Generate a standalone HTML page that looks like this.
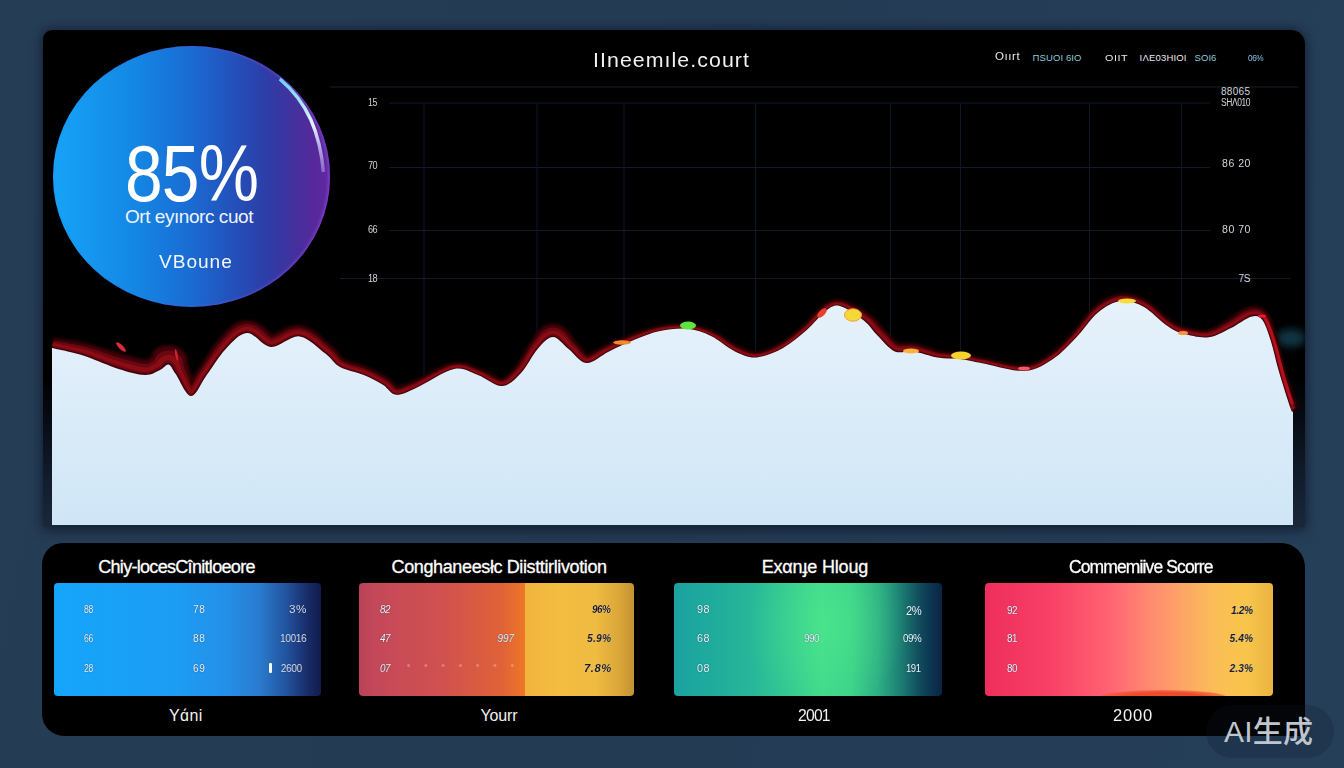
<!DOCTYPE html>
<html lang="en"><head><meta charset="utf-8"><title>Dashboard</title>
<style>
*{margin:0;padding:0;box-sizing:border-box}
html,body{width:1344px;height:768px;overflow:hidden}
body{position:relative;font-family:"Liberation Sans","Noto Sans CJK SC",sans-serif;color:#fff;
 background:linear-gradient(100deg,#263d56 0%,#243b54 50%,#263f59 100%);}
.abs{position:absolute;white-space:nowrap;line-height:1}
#main{position:absolute;left:43px;top:30px;width:1262px;height:497px;border-radius:9px 14px 0 0;
 background:linear-gradient(180deg,#000 0,#000 70%,#080e17 80%,#121e2e 91%,#192839 100%);
 box-shadow:0 -2px 9px rgba(16,26,40,.5),0 4px 12px rgba(14,24,38,.6);}
#chart{position:absolute;left:0;top:0}
#gauge{position:absolute;left:52.6px;top:46.2px;width:277.6px;height:260.4px;border-radius:50%;
 background:linear-gradient(90deg,#16a2f7 0%,#1598f0 12%,#1486e4 30%,#1a6bd2 50%,#2352bc 64%,#2c3fa8 76%,#40329e 86%,#55299a 94%,#6228a0 100%);box-shadow:inset -2px 0 3px rgba(150,80,240,.5);}
#bottom{position:absolute;left:42px;top:543px;width:1263px;height:193px;background:#000;border-radius:21px 24px 3px 22px}
.card{position:absolute;top:583px;height:113px;border-radius:4px}
</style></head><body>
<div id="main"></div>
<svg id="chart" width="1344" height="768" viewBox="0 0 1344 768">
 <defs>
  <filter id="bl2" x="-50%" y="-50%" width="200%" height="200%"><feGaussianBlur stdDeviation="4"/></filter>
  <clipPath id="pc"><rect x="43" y="30" width="1262" height="497"/></clipPath>
  <filter id="bl" x="-2%" y="-20%" width="104%" height="140%"><feGaussianBlur stdDeviation="1.1"/></filter>
  <linearGradient id="wf" x1="0" y1="0" x2="0" y2="1"><stop offset="0" stop-color="#e6f2fb"/><stop offset=".45" stop-color="#dcecf9"/><stop offset="1" stop-color="#cfe6f6"/></linearGradient>
 </defs>
 <g stroke="#13192b" stroke-width="1" fill="none">
  <path d="M330 87H1298" stroke="#1b1e27"/>
  <path d="M389 103H1210M389 167.5H1210M389 230.5H1210"/>
  <path d="M340 278.5H1290" stroke="#15192a"/>
  <path stroke="#10162a" d="M424 103V380M537 103V380M624 103V360M755.5 103V360M890.5 103V360M960.5 103V365M1089.5 103V330M1181.5 103V340"/>
 </g>
 <g clip-path="url(#pc)"><ellipse cx="1291" cy="338" rx="15" ry="9" fill="#14485a" opacity=".75" filter="url(#bl2)"/></g>
 <path d="M51.7 349.5 L53.1 349.8 L54.9 350.2 L57.1 350.7 L59.6 351.2 L62.1 351.8 L64.7 352.4 L67.3 353.0 L69.6 353.6 L71.7 354.2 L73.7 354.7 L75.6 355.2 L77.5 355.7 L79.5 356.3 L81.7 357.0 L84.2 357.8 L87.0 358.8 L90.2 360.0 L93.8 361.5 L97.7 363.1 L101.8 364.9 L105.9 366.6 L110.1 368.3 L114.1 369.9 L117.9 371.2 L121.5 372.3 L125.1 373.4 L128.7 374.4 L132.1 375.3 L135.5 376.1 L138.8 376.7 L141.8 377.1 L144.8 377.3 L147.5 377.2 L150.0 376.7 L152.3 376.1 L154.4 375.3 L156.3 374.4 L158.0 373.6 L159.5 372.8 L161.1 372.1 L162.7 371.3 L164.2 370.3 L165.5 369.2 L166.6 368.3 L167.5 367.7 L168.1 367.3 L168.1 367.3 L168.0 367.3 L168.0 367.4 L168.2 367.5 L168.7 368.1 L169.4 368.9 L170.3 370.1 L171.3 371.6 L172.5 373.4 L173.9 375.2 L175.4 377.5 L177.2 380.5 L179.2 384.1 L181.3 387.8 L183.5 391.3 L185.7 394.3 L188.1 396.5 L190.9 397.5 L193.7 396.8 L195.9 394.9 L197.9 392.4 L199.9 389.3 L201.9 385.9 L203.8 382.4 L205.8 379.0 L207.9 375.9 L210.1 372.8 L212.4 369.5 L214.7 366.0 L217.1 362.6 L219.5 359.2 L222.0 355.9 L224.4 352.8 L226.9 350.1 L229.5 347.5 L232.0 344.8 L234.6 342.2 L237.2 339.9 L239.8 337.9 L242.3 336.3 L244.7 335.3 L247.0 334.9 L249.2 335.3 L251.7 336.6 L254.4 338.6 L257.3 341.1 L260.4 343.7 L263.6 346.1 L267.1 347.9 L270.9 348.8 L274.8 348.4 L278.6 347.1 L282.3 345.1 L286.0 343.0 L289.6 340.9 L293.1 339.2 L296.3 338.2 L299.3 338.0 L302.4 338.8 L305.7 340.3 L309.1 342.3 L312.6 344.8 L315.9 347.5 L319.1 350.2 L322.1 352.7 L324.8 354.9 L327.1 356.7 L328.9 358.5 L330.5 360.2 L332.0 361.9 L333.5 363.5 L335.2 365.1 L337.1 366.7 L339.4 368.1 L342.0 369.4 L345.0 370.5 L348.1 371.5 L351.3 372.4 L354.5 373.3 L357.6 374.2 L360.6 375.1 L363.3 376.2 L366.0 377.3 L368.5 378.4 L371.0 379.6 L373.5 380.9 L375.8 382.1 L378.1 383.4 L380.2 384.6 L382.2 385.8 L384.0 387.1 L385.6 388.5 L387.1 390.1 L388.5 391.7 L390.0 393.2 L391.7 394.5 L393.7 395.5 L395.9 396.0 L398.1 396.0 L400.3 395.7 L402.5 395.1 L404.9 394.3 L407.3 393.2 L410.0 392.0 L413.0 390.5 L416.5 389.0 L420.5 387.0 L425.1 384.4 L430.0 381.5 L435.2 378.5 L440.4 375.6 L445.4 373.1 L450.1 371.1 L454.2 369.9 L457.7 369.4 L460.9 369.5 L463.8 370.0 L466.6 371.0 L469.2 372.1 L471.9 373.4 L474.7 374.7 L477.6 375.9 L480.6 377.2 L483.6 378.8 L486.7 380.7 L489.8 382.5 L492.9 384.3 L496.0 385.8 L499.0 386.8 L502.0 387.1 L504.9 386.6 L507.6 385.7 L510.2 384.3 L512.7 382.6 L515.0 380.6 L517.4 378.4 L519.6 376.1 L521.9 373.8 L524.2 371.2 L526.4 368.2 L528.5 365.0 L530.6 361.6 L532.7 358.3 L534.7 355.1 L536.7 352.3 L538.7 349.9 L540.7 347.7 L542.7 345.6 L544.6 343.7 L546.5 342.1 L548.3 340.7 L550.0 339.7 L551.6 339.2 L553.0 339.0 L554.3 339.2 L555.8 339.9 L557.5 341.1 L559.4 342.7 L561.4 344.5 L563.4 346.5 L565.5 348.4 L567.6 350.1 L569.7 351.9 L571.8 353.9 L573.9 356.2 L576.1 358.4 L578.4 360.5 L580.9 362.3 L583.5 363.6 L586.3 364.2 L589.2 363.9 L592.1 363.0 L594.9 361.5 L597.8 359.8 L600.7 357.8 L603.6 355.8 L606.5 353.9 L609.5 352.3 L612.5 350.8 L615.7 349.2 L619.0 347.7 L622.2 346.1 L625.5 344.5 L628.8 343.0 L632.1 341.6 L635.3 340.3 L638.5 339.0 L641.6 337.7 L644.6 336.5 L647.7 335.4 L650.7 334.3 L653.8 333.3 L656.9 332.4 L660.1 331.7 L663.5 331.1 L666.9 330.5 L670.4 330.0 L674.0 329.6 L677.5 329.3 L680.9 329.2 L684.3 329.2 L687.5 329.4 L690.6 329.8 L693.6 330.4 L696.5 331.1 L699.3 331.9 L702.1 332.9 L704.9 334.1 L707.8 335.3 L710.7 336.7 L713.6 338.3 L716.6 340.2 L719.6 342.2 L722.6 344.4 L725.7 346.6 L728.7 348.7 L731.7 350.6 L734.6 352.2 L737.4 353.5 L740.1 354.7 L742.8 355.8 L745.5 356.7 L748.1 357.5 L750.9 358.0 L753.8 358.2 L756.8 358.2 L759.9 357.8 L763.2 357.1 L766.6 356.1 L770.0 354.9 L773.4 353.5 L776.8 352.0 L780.2 350.4 L783.4 348.7 L786.5 346.8 L789.7 344.8 L792.8 342.6 L795.8 340.2 L798.8 337.8 L801.7 335.4 L804.5 333.0 L807.2 330.6 L809.9 328.2 L812.5 325.6 L815.0 322.9 L817.4 320.2 L819.7 317.7 L822.0 315.4 L824.1 313.3 L826.2 311.7 L828.1 310.2 L829.9 309.0 L831.4 307.9 L832.9 307.2 L834.4 306.6 L835.9 306.4 L837.7 306.4 L839.8 306.9 L842.2 307.7 L845.1 309.1 L848.2 310.8 L851.3 312.8 L854.5 315.0 L857.6 317.3 L860.5 319.4 L863.0 321.4 L865.2 323.3 L867.0 325.2 L868.7 327.1 L870.3 329.0 L871.9 331.0 L873.5 333.0 L875.2 335.0 L877.0 336.9 L879.0 339.0 L881.0 341.1 L883.0 343.4 L885.1 345.6 L887.3 347.7 L889.5 349.7 L891.9 351.3 L894.3 352.6 L896.8 353.4 L899.2 353.6 L901.7 353.5 L904.0 353.2 L906.4 352.9 L908.8 352.5 L911.2 352.4 L913.7 352.5 L916.3 353.0 L919.2 353.6 L922.1 354.4 L925.2 355.3 L928.3 356.2 L931.4 357.0 L934.5 357.7 L937.4 358.3 L940.4 358.7 L943.2 358.9 L946.1 359.1 L948.9 359.2 L951.6 359.2 L954.4 359.4 L957.1 359.5 L959.9 359.8 L962.5 360.2 L965.0 360.6 L967.4 361.0 L969.8 361.5 L972.4 362.1 L975.2 362.7 L978.5 363.3 L982.2 364.1 L986.7 365.0 L991.7 366.2 L997.3 367.6 L1003.1 368.9 L1008.9 370.2 L1014.6 371.2 L1020.0 371.8 L1024.8 371.8 L1029.2 371.3 L1033.2 370.4 L1037.0 369.1 L1040.5 367.5 L1043.9 365.7 L1047.1 363.8 L1050.3 361.8 L1053.5 359.7 L1056.6 357.5 L1059.6 355.1 L1062.5 352.6 L1065.3 349.9 L1068.0 347.2 L1070.8 344.4 L1073.5 341.5 L1076.3 338.6 L1079.1 335.5 L1082.0 332.1 L1084.7 328.7 L1087.5 325.2 L1090.3 321.7 L1093.1 318.5 L1095.8 315.6 L1098.6 313.1 L1101.4 310.9 L1104.2 309.0 L1107.1 307.2 L1109.9 305.6 L1112.8 304.3 L1115.6 303.3 L1118.4 302.5 L1121.1 302.0 L1123.9 301.8 L1126.6 302.0 L1129.3 302.4 L1132.1 303.0 L1134.8 303.9 L1137.6 305.0 L1140.4 306.2 L1143.1 307.6 L1145.9 309.3 L1148.7 311.5 L1151.6 313.9 L1154.5 316.4 L1157.4 319.0 L1160.2 321.5 L1162.9 323.8 L1165.5 325.7 L1167.8 327.3 L1169.9 328.7 L1171.9 329.9 L1173.9 331.0 L1175.8 332.0 L1177.9 332.9 L1180.2 333.7 L1182.7 334.5 L1185.6 335.3 L1188.6 336.1 L1191.9 336.9 L1195.3 337.6 L1198.7 338.1 L1202.2 338.4 L1205.5 338.5 L1208.7 338.4 L1211.8 337.8 L1214.8 337.0 L1217.8 335.9 L1220.7 334.6 L1223.5 333.3 L1226.2 331.9 L1228.9 330.5 L1231.6 329.1 L1234.3 327.7 L1237.1 326.1 L1239.8 324.4 L1242.5 322.8 L1245.0 321.2 L1247.4 319.8 L1249.5 318.8 L1251.4 318.1 L1253.1 317.6 L1254.6 317.4 L1255.8 317.3 L1256.9 317.4 L1257.9 317.7 L1258.9 318.2 L1259.9 319.0 L1261.1 320.2 L1262.2 321.8 L1263.4 323.8 L1264.5 326.1 L1265.6 328.7 L1266.7 331.6 L1267.7 334.6 L1268.8 337.8 L1269.9 341.0 L1270.9 344.3 L1271.9 347.9 L1272.9 351.6 L1273.8 355.5 L1274.8 359.5 L1275.8 363.6 L1276.9 367.8 L1278.1 372.1 L1279.4 376.6 L1280.9 381.7 L1282.6 386.9 L1284.2 392.2 L1285.8 397.3 L1287.3 401.9 L1288.6 405.8 L1289.6 408.8 L1290.4 410.9 L1291.0 412.1 L1291.7 412.9 L1293.2 412.9 L1293.7 412.1 L1293.8 411.6 L1293.8 411.6 L1293.3 412.0 L1290.8 404.4 L1286.9 407.4 L1286.1 409.5 L1286.1 409.3 L1288.3 406.5 L1296.4 406.4 L1297.9 408.1 L1297.7 407.8 L1297.0 406.2 L1296.0 403.3 L1294.7 399.5 L1293.1 395.0 L1291.5 389.9 L1289.8 384.7 L1288.1 379.5 L1286.5 374.5 L1285.1 370.0 L1283.9 365.9 L1282.8 361.9 L1281.7 357.8 L1280.7 353.8 L1279.8 349.9 L1278.8 346.1 L1277.9 342.3 L1276.9 338.8 L1275.9 335.4 L1275.0 332.1 L1274.1 328.9 L1273.1 325.8 L1272.1 322.8 L1271.0 319.9 L1269.7 317.1 L1268.2 314.6 L1266.5 312.3 L1264.5 310.4 L1262.0 308.6 L1259.1 307.4 L1256.2 306.8 L1253.4 306.8 L1250.9 307.1 L1248.2 307.6 L1245.1 308.7 L1242.2 310.2 L1239.4 311.9 L1236.7 313.7 L1234.2 315.6 L1231.7 317.3 L1229.4 318.9 L1227.0 320.4 L1224.5 321.9 L1221.8 323.5 L1219.3 325.1 L1216.8 326.5 L1214.4 327.8 L1212.1 328.8 L1209.9 329.6 L1207.8 330.2 L1205.4 330.5 L1202.7 330.5 L1199.7 330.3 L1196.6 330.0 L1193.5 329.4 L1190.4 328.8 L1187.5 328.1 L1184.8 327.4 L1182.5 326.8 L1180.6 326.1 L1178.8 325.5 L1177.2 324.7 L1175.5 323.8 L1173.7 322.8 L1171.7 321.5 L1169.6 320.0 L1167.3 318.3 L1164.8 316.2 L1162.2 313.7 L1159.3 311.1 L1156.4 308.4 L1153.3 305.7 L1150.1 303.2 L1146.8 301.1 L1143.6 299.5 L1140.6 298.0 L1137.4 296.7 L1134.2 295.6 L1130.8 294.7 L1127.3 294.2 L1123.8 294.0 L1120.2 294.2 L1116.6 294.9 L1113.2 295.9 L1109.8 297.2 L1106.5 298.8 L1103.3 300.7 L1100.1 302.8 L1097.1 305.1 L1094.0 307.6 L1090.9 310.6 L1087.9 313.9 L1085.0 317.3 L1082.2 320.9 L1079.5 324.5 L1076.8 328.0 L1074.2 331.2 L1071.6 334.2 L1068.9 337.1 L1066.2 340.0 L1063.5 342.7 L1060.9 345.4 L1058.2 347.9 L1055.6 350.3 L1052.8 352.4 L1049.9 354.4 L1046.8 356.4 L1043.8 358.4 L1040.7 360.2 L1037.7 361.9 L1034.7 363.2 L1031.5 364.3 L1028.1 365.1 L1024.5 365.6 L1020.4 365.6 L1015.5 365.1 L1010.1 364.2 L1004.4 363.0 L998.7 361.7 L993.1 360.4 L988.0 359.2 L983.4 358.3 L979.6 357.5 L976.4 356.9 L973.6 356.2 L971.0 355.6 L968.6 355.1 L966.1 354.5 L963.5 354.0 L960.7 353.5 L957.7 353.2 L954.7 352.9 L951.9 352.7 L949.1 352.6 L946.4 352.4 L943.7 352.2 L941.1 351.8 L938.6 351.3 L936.0 350.7 L933.3 349.8 L930.4 348.8 L927.4 347.8 L924.4 346.6 L921.2 345.6 L918.1 344.6 L914.8 343.8 L911.3 343.4 L908.0 343.4 L905.1 343.5 L902.8 343.7 L900.9 343.8 L899.6 343.7 L898.8 343.5 L898.2 343.3 L897.3 342.7 L895.9 341.6 L894.3 340.2 L892.5 338.4 L890.6 336.3 L888.6 334.1 L886.5 331.9 L884.5 329.8 L882.8 328.0 L881.4 326.4 L879.9 324.6 L878.2 322.6 L876.3 320.5 L874.1 318.4 L871.7 316.2 L868.9 314.2 L866.0 312.2 L862.7 310.2 L859.2 308.2 L855.6 306.2 L852.0 304.3 L848.4 302.6 L844.9 301.2 L841.5 300.3 L838.4 299.9 L835.5 300.0 L832.8 300.5 L830.3 301.4 L828.2 302.5 L826.2 303.8 L824.4 305.1 L822.3 306.6 L820.0 308.6 L817.5 310.9 L815.1 313.4 L812.7 316.0 L810.3 318.6 L807.9 321.2 L805.5 323.6 L803.1 325.9 L800.4 328.2 L797.6 330.6 L794.8 333.0 L792.0 335.4 L789.1 337.6 L786.2 339.7 L783.3 341.7 L780.4 343.4 L777.4 345.0 L774.3 346.6 L771.1 348.1 L767.9 349.4 L764.8 350.5 L761.8 351.4 L758.9 351.9 L756.3 352.2 L754.0 352.2 L751.7 351.9 L749.6 351.4 L747.4 350.7 L745.1 349.8 L742.7 348.7 L740.2 347.5 L737.6 346.3 L735.0 344.9 L732.3 343.3 L729.4 341.4 L726.3 339.3 L723.1 337.2 L719.9 335.1 L716.6 333.2 L713.2 331.5 L710.1 330.2 L707.0 329.0 L704.0 328.0 L700.9 327.0 L697.8 326.2 L694.6 325.5 L691.4 325.0 L688.0 324.6 L684.5 324.3 L680.9 324.3 L677.2 324.3 L673.5 324.5 L669.8 324.8 L666.1 325.2 L662.5 325.7 L659.0 326.3 L655.6 327.0 L652.2 327.8 L648.9 328.8 L645.7 329.8 L642.5 330.9 L639.3 332.0 L636.1 333.2 L632.9 334.3 L629.6 335.6 L626.1 336.9 L622.7 338.3 L619.2 339.7 L615.8 341.1 L612.5 342.5 L609.2 343.9 L605.9 345.3 L602.5 347.0 L599.1 349.0 L596.0 350.9 L593.2 352.6 L590.7 353.9 L588.7 354.8 L587.4 355.0 L586.9 354.9 L586.7 354.7 L586.1 354.1 L584.9 352.9 L583.3 351.2 L581.5 349.0 L579.5 346.5 L577.3 343.8 L575.2 341.4 L573.6 339.5 L572.3 337.5 L570.8 335.2 L569.0 332.6 L566.7 329.9 L563.6 327.2 L559.1 324.8 L553.2 323.8 L547.7 324.7 L543.4 326.7 L540.2 329.3 L537.7 332.0 L535.7 334.9 L534.0 337.6 L532.3 340.3 L530.4 343.0 L528.4 346.1 L526.3 349.6 L524.3 353.1 L522.3 356.5 L520.4 359.8 L518.6 362.8 L516.8 365.4 L515.1 367.6 L513.1 369.8 L511.1 372.0 L509.2 374.0 L507.4 375.8 L505.7 377.1 L504.2 378.1 L502.9 378.7 L501.8 379.0 L500.7 378.9 L498.9 378.5 L496.5 377.4 L493.7 376.0 L490.6 374.2 L487.3 372.4 L483.8 370.6 L480.4 369.2 L477.5 368.2 L474.9 367.1 L472.1 365.8 L468.9 364.6 L465.5 363.6 L461.6 362.9 L457.4 362.7 L452.7 363.3 L447.8 364.7 L442.5 366.8 L437.1 369.4 L431.7 372.2 L426.3 375.0 L421.3 377.7 L416.8 379.9 L413.0 381.6 L409.6 383.0 L406.5 384.3 L403.9 385.3 L401.7 386.1 L399.9 386.7 L398.6 386.9 L397.6 387.0 L397.0 386.9 L396.8 386.9 L396.7 386.7 L396.2 386.2 L395.2 385.2 L393.8 383.8 L392.1 381.9 L389.9 379.9 L387.4 378.0 L385.0 376.5 L382.7 375.2 L380.3 373.8 L377.8 372.5 L375.2 371.2 L372.5 369.9 L369.8 368.6 L366.9 367.3 L363.7 366.1 L360.4 365.0 L357.1 364.0 L353.9 363.1 L350.9 362.2 L348.2 361.3 L345.9 360.4 L344.2 359.5 L342.9 358.6 L341.9 357.6 L340.9 356.5 L339.7 355.1 L338.3 353.2 L336.5 351.1 L334.2 348.7 L331.7 346.5 L329.2 344.2 L326.4 341.7 L323.2 338.7 L319.7 335.6 L315.8 332.5 L311.5 329.6 L306.6 327.1 L300.6 325.5 L294.1 325.6 L288.3 327.2 L283.5 329.3 L279.4 331.5 L275.9 333.3 L273.2 334.6 L271.7 335.0 L271.8 334.9 L272.2 334.8 L271.3 334.2 L269.3 332.5 L266.7 330.1 L263.5 327.3 L259.5 324.3 L254.0 321.5 L247.0 320.4 L240.6 321.5 L235.7 323.7 L231.6 326.4 L228.2 329.4 L225.2 332.5 L222.5 335.6 L220.1 338.6 L217.6 341.6 L214.9 344.8 L212.3 348.5 L209.8 352.2 L207.4 355.8 L205.0 359.5 L202.8 362.9 L200.7 366.2 L198.5 369.3 L196.1 372.8 L193.9 376.6 L191.9 380.2 L190.1 383.3 L188.5 385.7 L187.5 386.9 L188.0 386.5 L191.6 385.7 L195.0 386.5 L195.1 386.3 L194.1 384.3 L192.8 381.2 L191.5 377.5 L190.3 373.6 L189.0 369.7 L187.8 366.2 L187.3 363.9 L187.3 362.1 L187.3 360.3 L187.1 358.2 L186.2 355.5 L183.9 352.1 L179.6 348.4 L172.8 345.5 L164.3 345.4 L157.6 348.0 L154.2 350.9 L152.6 353.0 L152.0 354.4 L152.0 355.2 L152.6 355.4 L152.7 355.8 L151.5 356.8 L149.9 358.0 L148.6 358.8 L147.6 359.4 L146.9 359.7 L146.3 359.8 L145.8 359.9 L145.1 359.9 L143.6 359.7 L141.6 359.3 L139.1 358.8 L136.4 358.0 L133.3 357.2 L130.1 356.3 L126.7 355.4 L123.3 354.5 L119.9 353.6 L116.1 352.5 L112.1 351.3 L107.9 350.0 L103.6 348.6 L99.5 347.3 L95.5 346.1 L91.8 345.1 L88.7 344.2 L85.9 343.5 L83.4 343.0 L81.1 342.5 L78.9 342.1 L76.9 341.8 L74.9 341.5 L72.7 341.1 L70.2 340.6 L67.5 340.2 L64.8 339.7 L62.1 339.3 L59.6 338.9 L57.4 338.6 L55.5 338.3 L54.1 338.1Z" fill="#420308" stroke="#2a0205" stroke-width="2" stroke-linejoin="round" filter="url(#bl)"/>
 <path d="M52.2 347.0 L53.6 347.3 L55.5 347.7 L57.7 348.1 L60.1 348.7 L62.7 349.2 L65.3 349.8 L67.9 350.3 L70.3 350.9 L72.4 351.4 L74.4 351.9 L76.3 352.4 L78.3 352.9 L80.4 353.4 L82.6 354.1 L85.2 354.9 L88.0 355.8 L91.3 357.0 L95.0 358.4 L99.0 360.0 L103.1 361.6 L107.3 363.3 L111.4 364.9 L115.4 366.3 L119.1 367.6 L122.6 368.6 L126.2 369.7 L129.7 370.7 L133.1 371.6 L136.3 372.3 L139.4 372.9 L142.2 373.3 L144.8 373.5 L147.1 373.4 L149.2 373.1 L151.1 372.5 L152.9 371.8 L154.6 371.0 L156.2 370.2 L157.8 369.3 L159.3 368.6 L160.5 367.9 L161.6 367.0 L162.6 366.0 L163.6 365.0 L164.6 364.0 L165.8 363.2 L167.3 362.6 L169.0 362.6 L170.5 363.2 L171.6 364.2 L172.5 365.3 L173.3 366.6 L174.0 368.0 L174.8 369.6 L175.7 371.3 L176.9 373.2 L178.4 375.8 L180.1 379.0 L181.9 382.7 L183.8 386.3 L185.8 389.7 L187.8 392.5 L189.6 394.4 L191.1 395.0 L192.4 394.6 L194.1 393.2 L195.9 390.9 L197.8 388.0 L199.7 384.6 L201.7 381.1 L203.7 377.6 L205.9 374.4 L208.1 371.3 L210.3 368.0 L212.6 364.6 L215.0 361.1 L217.4 357.6 L219.9 354.3 L222.4 351.1 L224.9 348.3 L227.4 345.5 L230.0 342.8 L232.6 340.1 L235.3 337.6 L238.0 335.4 L240.9 333.6 L243.8 332.3 L247.0 331.7 L250.3 332.3 L253.4 333.9 L256.4 336.1 L259.4 338.7 L262.3 341.3 L265.3 343.5 L268.2 345.1 L271.1 345.8 L274.1 345.5 L277.4 344.3 L280.9 342.6 L284.5 340.5 L288.3 338.4 L292.0 336.6 L295.8 335.5 L299.6 335.3 L303.3 336.3 L307.0 337.9 L310.6 340.2 L314.1 342.8 L317.5 345.6 L320.7 348.3 L323.6 350.9 L326.3 353.1 L328.6 355.0 L330.5 356.9 L332.2 358.7 L333.7 360.4 L335.1 362.0 L336.6 363.5 L338.3 364.9 L340.4 366.2 L342.9 367.5 L345.7 368.5 L348.7 369.5 L351.8 370.4 L355.0 371.3 L358.2 372.2 L361.3 373.2 L364.1 374.2 L366.8 375.4 L369.4 376.6 L371.9 377.8 L374.4 379.0 L376.8 380.3 L379.1 381.6 L381.2 382.9 L383.3 384.1 L385.3 385.5 L387.0 387.1 L388.5 388.7 L390.0 390.3 L391.4 391.7 L392.8 392.8 L394.3 393.6 L396.1 394.0 L398.0 394.1 L399.9 393.8 L402.0 393.3 L404.2 392.5 L406.6 391.5 L409.3 390.3 L412.3 388.9 L415.7 387.4 L419.7 385.4 L424.2 382.9 L429.2 380.1 L434.4 377.1 L439.7 374.3 L444.8 371.7 L449.6 369.7 L453.9 368.4 L457.6 367.9 L461.0 368.0 L464.2 368.6 L467.1 369.6 L469.9 370.7 L472.6 372.0 L475.3 373.3 L478.2 374.4 L481.3 375.7 L484.4 377.4 L487.6 379.3 L490.6 381.1 L493.7 382.8 L496.6 384.2 L499.4 385.1 L502.0 385.3 L504.5 384.9 L506.9 384.0 L509.2 382.7 L511.5 381.1 L513.8 379.2 L516.0 377.0 L518.2 374.8 L520.4 372.5 L522.6 369.9 L524.7 367.0 L526.8 363.8 L528.8 360.5 L530.8 357.2 L532.9 353.9 L534.9 351.0 L536.9 348.4 L538.9 346.1 L540.8 343.9 L542.7 341.8 L544.6 339.9 L546.6 338.2 L548.6 336.9 L550.7 336.0 L553.0 335.7 L555.3 336.1 L557.5 337.2 L559.5 338.7 L561.5 340.5 L563.4 342.5 L565.3 344.5 L567.3 346.5 L569.3 348.2 L571.4 350.1 L573.5 352.3 L575.6 354.6 L577.7 356.8 L579.8 358.9 L582.0 360.5 L584.2 361.7 L586.5 362.2 L588.8 362.0 L591.3 361.2 L594.0 359.9 L596.8 358.2 L599.7 356.3 L602.6 354.3 L605.6 352.4 L608.7 350.8 L611.8 349.3 L615.0 347.8 L618.3 346.2 L621.6 344.7 L624.9 343.2 L628.3 341.7 L631.6 340.3 L634.8 339.0 L638.0 337.7 L641.1 336.5 L644.1 335.3 L647.2 334.2 L650.3 333.1 L653.5 332.1 L656.6 331.3 L659.9 330.5 L663.3 329.9 L666.7 329.3 L670.3 328.9 L673.9 328.5 L677.4 328.2 L680.9 328.1 L684.3 328.2 L687.6 328.4 L690.8 328.8 L693.8 329.3 L696.8 330.0 L699.7 330.9 L702.5 331.9 L705.4 333.0 L708.3 334.2 L711.2 335.6 L714.2 337.2 L717.3 339.1 L720.4 341.1 L723.4 343.3 L726.5 345.5 L729.5 347.5 L732.4 349.4 L735.3 350.9 L738.0 352.2 L740.7 353.4 L743.3 354.5 L745.9 355.4 L748.5 356.2 L751.1 356.7 L753.8 356.9 L756.7 356.9 L759.7 356.5 L762.9 355.8 L766.2 354.9 L769.5 353.7 L772.9 352.4 L776.3 350.8 L779.6 349.2 L782.7 347.5 L785.8 345.7 L788.9 343.7 L792.0 341.5 L795.0 339.2 L797.9 336.8 L800.8 334.4 L803.6 331.9 L806.3 329.6 L809.0 327.2 L811.5 324.6 L814.0 322.0 L816.4 319.3 L818.7 316.8 L821.0 314.4 L823.2 312.3 L825.4 310.6 L827.3 309.1 L829.1 307.9 L830.7 306.8 L832.3 305.9 L834.0 305.3 L835.8 305.0 L837.9 305.0 L840.2 305.4 L842.8 306.3 L845.8 307.7 L849.0 309.4 L852.3 311.4 L855.6 313.5 L858.7 315.7 L861.7 317.9 L864.3 319.9 L866.6 321.8 L868.6 323.7 L870.4 325.7 L872.0 327.6 L873.6 329.6 L875.2 331.5 L876.8 333.5 L878.7 335.4 L880.6 337.4 L882.6 339.6 L884.7 341.8 L886.7 344.0 L888.8 346.1 L890.9 347.9 L893.0 349.5 L895.1 350.6 L897.2 351.2 L899.3 351.5 L901.5 351.4 L903.8 351.2 L906.1 350.8 L908.6 350.5 L911.2 350.4 L913.9 350.6 L916.7 351.2 L919.6 351.9 L922.6 352.7 L925.7 353.6 L928.7 354.6 L931.8 355.4 L934.8 356.2 L937.7 356.8 L940.5 357.2 L943.3 357.5 L946.1 357.6 L948.9 357.7 L951.7 357.8 L954.5 358.0 L957.3 358.1 L960.1 358.5 L962.7 358.8 L965.2 359.3 L967.6 359.7 L970.1 360.3 L972.6 360.8 L975.5 361.4 L978.7 362.1 L982.5 362.8 L987.0 363.7 L992.0 364.9 L997.6 366.3 L1003.4 367.7 L1009.2 368.9 L1014.8 369.9 L1020.1 370.4 L1024.8 370.5 L1028.9 370.0 L1032.8 369.1 L1036.5 367.8 L1039.9 366.3 L1043.2 364.5 L1046.4 362.6 L1049.5 360.6 L1052.7 358.5 L1055.8 356.4 L1058.7 354.1 L1061.6 351.6 L1064.3 349.0 L1067.1 346.2 L1069.8 343.4 L1072.5 340.5 L1075.3 337.6 L1078.1 334.6 L1080.8 331.2 L1083.6 327.8 L1086.4 324.2 L1089.1 320.8 L1091.9 317.5 L1094.8 314.5 L1097.6 311.9 L1100.5 309.7 L1103.4 307.6 L1106.3 305.8 L1109.2 304.1 L1112.1 302.8 L1115.1 301.7 L1118.0 300.8 L1120.9 300.3 L1123.8 300.1 L1126.7 300.3 L1129.6 300.7 L1132.5 301.4 L1135.4 302.3 L1138.2 303.5 L1141.1 304.8 L1143.9 306.2 L1146.8 308.0 L1149.7 310.2 L1152.7 312.7 L1155.6 315.3 L1158.4 317.9 L1161.2 320.4 L1163.8 322.6 L1166.4 324.5 L1168.7 326.1 L1170.8 327.4 L1172.7 328.6 L1174.6 329.7 L1176.5 330.6 L1178.5 331.4 L1180.7 332.2 L1183.2 333.0 L1186.0 333.8 L1189.0 334.5 L1192.2 335.3 L1195.6 335.9 L1198.9 336.4 L1202.3 336.7 L1205.5 336.8 L1208.5 336.6 L1211.4 336.1 L1214.2 335.2 L1217.0 334.1 L1219.8 332.9 L1222.5 331.5 L1225.3 330.0 L1228.0 328.6 L1230.6 327.2 L1233.2 325.8 L1235.9 324.2 L1238.6 322.5 L1241.2 320.8 L1243.8 319.2 L1246.2 317.7 L1248.6 316.6 L1250.7 315.8 L1252.6 315.3 L1254.3 315.1 L1255.9 315.0 L1257.4 315.2 L1258.8 315.7 L1260.1 316.5 L1261.4 317.6 L1262.6 319.0 L1263.9 320.8 L1265.0 322.9 L1266.2 325.4 L1267.2 328.1 L1268.3 331.0 L1269.3 334.1 L1270.4 337.2 L1271.4 340.5 L1272.4 343.9 L1273.4 347.5 L1274.4 351.2 L1275.3 355.1 L1276.3 359.1 L1277.3 363.2 L1278.4 367.4 L1279.6 371.6 L1281.0 376.2 L1282.5 381.2 L1284.1 386.5 L1285.8 391.7 L1287.4 396.8 L1288.9 401.4 L1290.2 405.3 L1291.2 408.3 L1292.0 410.2 L1292.5 411.2 L1292.7 411.5 L1292.1 411.5 L1292.0 411.5 L1292.1 411.2 L1292.3 410.7 L1292.8 410.3 L1291.4 406.2 L1288.6 408.4 L1287.9 410.0 L1288.0 410.0 L1289.5 408.0 L1295.2 408.0 L1296.2 409.1 L1295.9 408.5 L1295.2 406.8 L1294.2 403.9 L1292.9 400.1 L1291.4 395.5 L1289.7 390.5 L1288.0 385.3 L1286.3 380.0 L1284.8 375.0 L1283.4 370.5 L1282.2 366.4 L1281.1 362.3 L1280.0 358.2 L1279.0 354.2 L1278.1 350.3 L1277.1 346.5 L1276.2 342.8 L1275.2 339.3 L1274.2 336.0 L1273.2 332.7 L1272.3 329.6 L1271.3 326.5 L1270.3 323.6 L1269.2 320.8 L1267.9 318.3 L1266.5 315.9 L1264.9 314.0 L1263.1 312.3 L1261.0 310.8 L1258.6 309.8 L1256.1 309.4 L1253.7 309.3 L1251.4 309.6 L1249.0 310.2 L1246.2 311.2 L1243.4 312.6 L1240.7 314.2 L1238.1 315.9 L1235.5 317.7 L1233.0 319.5 L1230.6 321.1 L1228.2 322.5 L1225.6 324.0 L1222.9 325.5 L1220.3 327.1 L1217.7 328.5 L1215.2 329.8 L1212.8 330.8 L1210.4 331.6 L1208.0 332.2 L1205.4 332.4 L1202.5 332.4 L1199.5 332.2 L1196.3 331.8 L1193.1 331.2 L1190.0 330.6 L1187.0 329.9 L1184.3 329.2 L1182.0 328.5 L1179.9 327.8 L1178.1 327.1 L1176.4 326.3 L1174.6 325.3 L1172.8 324.2 L1170.8 322.9 L1168.6 321.4 L1166.2 319.6 L1163.7 317.5 L1161.0 315.0 L1158.2 312.4 L1155.2 309.7 L1152.2 307.1 L1149.1 304.7 L1145.9 302.7 L1142.8 301.1 L1139.8 299.7 L1136.8 298.4 L1133.7 297.4 L1130.4 296.6 L1127.2 296.1 L1123.8 295.9 L1120.4 296.1 L1117.1 296.7 L1113.7 297.7 L1110.5 298.9 L1107.3 300.5 L1104.2 302.3 L1101.1 304.3 L1098.1 306.5 L1095.1 309.0 L1092.1 311.8 L1089.1 315.0 L1086.3 318.4 L1083.5 322.0 L1080.8 325.5 L1078.1 329.0 L1075.4 332.2 L1072.7 335.2 L1070.0 338.1 L1067.3 341.0 L1064.6 343.8 L1062.0 346.5 L1059.3 349.1 L1056.5 351.4 L1053.7 353.7 L1050.8 355.7 L1047.7 357.7 L1044.6 359.7 L1041.5 361.6 L1038.4 363.2 L1035.2 364.7 L1031.9 365.8 L1028.4 366.6 L1024.6 367.1 L1020.3 367.1 L1015.3 366.6 L1009.8 365.7 L1004.1 364.5 L998.3 363.2 L992.8 361.8 L987.7 360.6 L983.1 359.7 L979.4 358.9 L976.1 358.3 L973.3 357.7 L970.7 357.1 L968.3 356.5 L965.8 356.0 L963.3 355.5 L960.5 355.1 L957.6 354.7 L954.7 354.5 L951.8 354.3 L949.0 354.2 L946.3 354.0 L943.6 353.8 L941.0 353.5 L938.3 353.0 L935.6 352.4 L932.8 351.6 L929.9 350.6 L926.9 349.6 L923.8 348.5 L920.7 347.5 L917.7 346.7 L914.5 345.9 L911.2 345.6 L908.2 345.6 L905.4 345.8 L903.1 346.0 L901.1 346.2 L899.5 346.1 L898.3 345.9 L897.3 345.5 L896.0 344.8 L894.4 343.6 L892.6 342.0 L890.7 340.1 L888.8 338.0 L886.7 335.8 L884.7 333.6 L882.7 331.5 L881.0 329.7 L879.5 328.0 L877.9 326.1 L876.3 324.2 L874.5 322.1 L872.4 320.0 L870.1 317.9 L867.5 315.9 L864.6 314.0 L861.5 311.9 L858.1 309.8 L854.6 307.8 L851.0 305.9 L847.6 304.2 L844.2 302.8 L841.1 301.9 L838.2 301.5 L835.6 301.5 L833.2 302.0 L830.9 302.8 L829.0 303.8 L827.1 305.1 L825.3 306.4 L823.3 307.9 L821.0 309.7 L818.6 312.0 L816.2 314.4 L813.9 317.0 L811.5 319.6 L809.0 322.3 L806.6 324.7 L804.1 327.1 L801.4 329.4 L798.6 331.8 L795.8 334.2 L792.9 336.6 L790.0 338.8 L787.0 341.0 L784.1 342.9 L781.2 344.7 L778.1 346.3 L774.9 347.9 L771.7 349.4 L768.4 350.7 L765.2 351.9 L762.1 352.8 L759.2 353.4 L756.4 353.7 L753.9 353.7 L751.5 353.4 L749.2 352.9 L746.9 352.2 L744.6 351.3 L742.1 350.2 L739.5 349.0 L736.8 347.7 L734.2 346.3 L731.4 344.6 L728.5 342.7 L725.4 340.6 L722.3 338.4 L719.1 336.3 L715.8 334.4 L712.6 332.8 L709.5 331.5 L706.5 330.3 L703.5 329.2 L700.5 328.2 L697.5 327.4 L694.4 326.7 L691.2 326.2 L687.9 325.8 L684.5 325.5 L680.9 325.5 L677.3 325.6 L673.6 325.8 L670.0 326.1 L666.3 326.5 L662.8 327.0 L659.3 327.6 L655.9 328.3 L652.6 329.2 L649.3 330.1 L646.1 331.2 L643.0 332.3 L639.8 333.4 L636.7 334.6 L633.5 335.8 L630.2 337.0 L626.8 338.4 L623.4 339.8 L620.0 341.2 L616.6 342.7 L613.3 344.1 L610.0 345.6 L606.8 347.0 L603.4 348.7 L600.2 350.6 L597.1 352.5 L594.3 354.3 L591.7 355.8 L589.5 356.8 L587.8 357.2 L586.8 357.2 L586.0 356.9 L584.8 356.1 L583.3 354.8 L581.5 352.9 L579.7 350.7 L577.6 348.3 L575.5 345.8 L573.3 343.5 L571.6 341.7 L570.1 339.7 L568.5 337.5 L566.7 335.0 L564.5 332.6 L561.7 330.3 L557.9 328.3 L553.2 327.5 L548.6 328.2 L545.0 329.9 L542.2 332.1 L539.8 334.5 L537.9 337.0 L536.1 339.6 L534.3 342.1 L532.5 344.7 L530.4 347.6 L528.3 351.0 L526.3 354.3 L524.4 357.7 L522.4 361.1 L520.5 364.1 L518.6 366.8 L516.7 369.1 L514.7 371.4 L512.6 373.6 L510.6 375.6 L508.6 377.4 L506.8 378.9 L505.0 379.9 L503.4 380.6 L501.9 380.9 L500.3 380.8 L498.2 380.2 L495.6 379.1 L492.7 377.6 L489.6 375.8 L486.4 373.9 L483.0 372.2 L479.7 370.8 L476.8 369.8 L474.2 368.6 L471.4 367.4 L468.4 366.2 L465.1 365.1 L461.4 364.5 L457.4 364.3 L453.1 364.9 L448.3 366.3 L443.2 368.4 L437.9 370.9 L432.5 373.7 L427.2 376.6 L422.2 379.3 L417.7 381.6 L413.8 383.4 L410.4 384.8 L407.4 386.1 L404.7 387.2 L402.4 388.1 L400.6 388.7 L399.0 389.1 L397.7 389.2 L396.7 389.1 L396.0 389.0 L395.5 388.6 L394.7 387.9 L393.6 386.8 L392.2 385.3 L390.5 383.5 L388.5 381.6 L386.1 379.9 L383.8 378.5 L381.6 377.2 L379.2 375.9 L376.7 374.5 L374.2 373.2 L371.6 371.9 L368.9 370.7 L366.0 369.5 L362.9 368.3 L359.7 367.2 L356.4 366.3 L353.2 365.4 L350.2 364.5 L347.4 363.6 L345.0 362.6 L343.0 361.6 L341.5 360.5 L340.2 359.5 L339.1 358.2 L337.8 356.7 L336.4 354.9 L334.6 352.9 L332.4 350.7 L330.0 348.5 L327.4 346.3 L324.6 343.7 L321.5 340.8 L318.0 337.8 L314.2 334.9 L310.1 332.2 L305.6 330.0 L300.3 328.6 L294.6 328.7 L289.5 330.1 L285.0 332.1 L281.0 334.3 L277.4 336.2 L274.5 337.6 L272.4 338.3 L271.6 338.3 L270.9 338.0 L269.4 337.1 L267.2 335.2 L264.4 332.8 L261.3 330.0 L257.6 327.3 L252.8 324.9 L247.0 323.9 L241.6 324.9 L237.3 326.8 L233.6 329.2 L230.4 332.0 L227.5 334.9 L224.8 337.9 L222.3 340.8 L219.9 343.6 L217.3 346.8 L214.7 350.3 L212.2 353.9 L209.7 357.5 L207.4 361.1 L205.1 364.5 L203.0 367.8 L200.8 370.9 L198.5 374.3 L196.3 378.0 L194.3 381.6 L192.5 384.8 L190.8 387.3 L189.6 388.9 L189.4 389.0 L191.5 388.6 L193.3 389.0 L192.8 388.2 L191.5 386.0 L190.0 382.8 L188.5 379.1 L187.1 375.3 L185.7 371.6 L184.4 368.4 L183.7 366.2 L183.4 364.5 L183.2 362.7 L182.8 360.8 L181.9 358.6 L180.1 355.9 L176.7 353.0 L171.6 350.8 L165.2 350.8 L160.2 352.7 L157.4 355.0 L156.0 356.7 L155.3 358.0 L155.0 358.9 L155.1 359.3 L154.8 359.8 L153.5 360.7 L151.9 361.8 L150.5 362.6 L149.3 363.3 L148.2 363.7 L147.2 364.0 L146.2 364.1 L145.0 364.1 L143.2 363.9 L140.9 363.5 L138.3 363.0 L135.3 362.2 L132.2 361.4 L128.9 360.5 L125.4 359.5 L122.0 358.6 L118.5 357.6 L114.7 356.4 L110.6 355.0 L106.4 353.6 L102.2 352.2 L98.1 350.8 L94.2 349.5 L90.7 348.4 L87.6 347.5 L84.9 346.8 L82.4 346.2 L80.2 345.7 L78.1 345.3 L76.1 344.9 L74.1 344.6 L71.9 344.1 L69.5 343.7 L66.9 343.2 L64.2 342.7 L61.5 342.2 L59.0 341.8 L56.8 341.4 L54.9 341.1 L53.5 340.9Z" fill="#6a080f"/>
 <path d="M52.5 345.8 L53.9 346.1 L55.7 346.5 L57.9 346.9 L60.4 347.4 L63.0 347.9 L65.6 348.5 L68.2 349.1 L70.6 349.6 L72.7 350.1 L74.7 350.5 L76.7 351.0 L78.7 351.5 L80.8 352.0 L83.1 352.7 L85.6 353.4 L88.5 354.4 L91.9 355.5 L95.6 356.9 L99.6 358.5 L103.7 360.1 L107.9 361.7 L112.0 363.2 L116.0 364.6 L119.6 365.8 L123.2 366.9 L126.7 367.9 L130.2 368.9 L133.5 369.8 L136.7 370.5 L139.7 371.1 L142.4 371.5 L144.9 371.7 L146.9 371.6 L148.8 371.3 L150.6 370.8 L152.2 370.2 L153.8 369.4 L155.4 368.6 L157.0 367.7 L158.4 366.9 L159.5 366.2 L160.3 365.4 L161.2 364.5 L162.1 363.4 L163.2 362.3 L164.7 361.1 L166.9 360.3 L169.5 360.3 L171.7 361.2 L173.3 362.6 L174.3 364.0 L175.1 365.5 L175.8 367.0 L176.4 368.6 L177.3 370.3 L178.4 372.3 L179.8 375.0 L181.4 378.3 L183.2 382.0 L185.0 385.7 L186.9 389.0 L188.8 391.7 L190.3 393.3 L191.1 393.7 L191.8 393.5 L193.2 392.4 L194.9 390.2 L196.7 387.4 L198.6 384.0 L200.6 380.5 L202.7 377.0 L204.9 373.7 L207.1 370.7 L209.3 367.4 L211.6 363.9 L214.0 360.4 L216.4 356.9 L218.9 353.5 L221.4 350.3 L223.9 347.4 L226.4 344.6 L229.0 341.8 L231.6 339.1 L234.3 336.5 L237.2 334.2 L240.2 332.2 L243.4 330.9 L247.0 330.2 L250.7 330.9 L254.2 332.6 L257.3 335.0 L260.3 337.6 L263.3 340.1 L266.1 342.2 L268.7 343.7 L271.2 344.3 L273.8 344.1 L276.8 343.0 L280.2 341.3 L283.8 339.3 L287.6 337.2 L291.5 335.4 L295.6 334.1 L299.7 334.0 L303.8 335.0 L307.6 336.8 L311.3 339.2 L314.9 341.8 L318.3 344.7 L321.4 347.5 L324.4 350.0 L327.0 352.2 L329.4 354.2 L331.3 356.1 L333.0 358.0 L334.5 359.7 L335.9 361.3 L337.3 362.7 L338.9 364.1 L340.9 365.3 L343.3 366.5 L346.0 367.6 L349.0 368.5 L352.1 369.4 L355.3 370.3 L358.5 371.2 L361.6 372.2 L364.5 373.3 L367.2 374.5 L369.8 375.7 L372.4 376.9 L374.8 378.2 L377.2 379.5 L379.5 380.7 L381.7 382.0 L383.9 383.3 L385.9 384.8 L387.7 386.4 L389.2 388.1 L390.7 389.6 L392.0 390.9 L393.3 392.0 L394.7 392.7 L396.2 393.1 L397.9 393.1 L399.8 392.9 L401.7 392.4 L403.8 391.7 L406.2 390.7 L408.9 389.5 L411.9 388.1 L415.3 386.6 L419.3 384.7 L423.8 382.2 L428.8 379.4 L434.1 376.5 L439.4 373.6 L444.5 371.1 L449.3 369.0 L453.7 367.7 L457.6 367.2 L461.1 367.4 L464.3 368.0 L467.3 368.9 L470.2 370.1 L472.9 371.4 L475.6 372.6 L478.5 373.7 L481.6 375.0 L484.8 376.7 L488.0 378.6 L491.0 380.4 L494.0 382.1 L496.9 383.4 L499.6 384.2 L502.0 384.4 L504.2 384.1 L506.5 383.2 L508.7 382.0 L510.9 380.4 L513.1 378.5 L515.3 376.4 L517.5 374.1 L519.7 371.8 L521.8 369.3 L523.9 366.5 L525.9 363.3 L527.9 360.0 L530.0 356.6 L532.0 353.4 L534.0 350.3 L536.0 347.7 L538.0 345.3 L539.9 343.1 L541.8 340.9 L543.7 338.8 L545.7 337.0 L547.9 335.5 L550.3 334.5 L553.1 334.1 L555.8 334.6 L558.3 335.8 L560.5 337.5 L562.5 339.4 L564.4 341.5 L566.2 343.6 L568.1 345.5 L570.0 347.3 L572.2 349.3 L574.3 351.5 L576.4 353.9 L578.4 356.1 L580.5 358.1 L582.6 359.7 L584.5 360.7 L586.5 361.2 L588.6 361.1 L591.0 360.3 L593.6 359.1 L596.3 357.4 L599.2 355.6 L602.1 353.6 L605.2 351.7 L608.3 350.1 L611.5 348.6 L614.7 347.1 L617.9 345.6 L621.3 344.0 L624.6 342.5 L628.0 341.1 L631.3 339.7 L634.5 338.4 L637.7 337.1 L640.8 335.9 L643.9 334.7 L647.0 333.6 L650.1 332.5 L653.3 331.6 L656.5 330.7 L659.8 330.0 L663.2 329.3 L666.7 328.8 L670.2 328.3 L673.8 328.0 L677.4 327.7 L680.9 327.6 L684.4 327.6 L687.7 327.9 L690.9 328.3 L693.9 328.8 L696.9 329.5 L699.8 330.4 L702.7 331.3 L705.6 332.4 L708.5 333.7 L711.5 335.0 L714.6 336.6 L717.6 338.5 L720.7 340.6 L723.8 342.8 L726.8 344.9 L729.8 347.0 L732.7 348.8 L735.6 350.3 L738.3 351.6 L741.0 352.8 L743.5 353.9 L746.1 354.8 L748.6 355.5 L751.2 356.0 L753.8 356.3 L756.6 356.3 L759.6 355.9 L762.7 355.2 L766.0 354.3 L769.3 353.1 L772.7 351.8 L776.0 350.3 L779.3 348.7 L782.4 347.0 L785.5 345.2 L788.6 343.2 L791.6 341.0 L794.6 338.7 L797.5 336.3 L800.4 333.9 L803.2 331.4 L805.9 329.1 L808.5 326.7 L811.0 324.2 L813.5 321.5 L815.9 318.9 L818.2 316.3 L820.5 313.9 L822.8 311.8 L825.0 310.0 L826.9 308.6 L828.7 307.3 L830.4 306.2 L832.1 305.3 L833.8 304.7 L835.8 304.3 L837.9 304.3 L840.3 304.8 L843.1 305.6 L846.1 307.0 L849.4 308.7 L852.7 310.7 L856.1 312.8 L859.3 315.0 L862.3 317.1 L864.9 319.1 L867.3 321.0 L869.3 323.0 L871.2 325.0 L872.8 327.0 L874.4 328.9 L876.0 330.8 L877.6 332.7 L879.4 334.6 L881.4 336.7 L883.4 338.9 L885.5 341.1 L887.5 343.3 L889.6 345.3 L891.6 347.1 L893.6 348.6 L895.6 349.6 L897.4 350.2 L899.4 350.4 L901.4 350.4 L903.6 350.2 L906.0 349.9 L908.5 349.6 L911.2 349.5 L914.0 349.7 L916.9 350.3 L919.8 351.0 L922.9 351.9 L925.9 352.9 L929.0 353.8 L932.0 354.7 L935.0 355.5 L937.8 356.1 L940.6 356.5 L943.4 356.8 L946.2 356.9 L948.9 357.0 L951.7 357.1 L954.5 357.3 L957.3 357.5 L960.2 357.8 L962.8 358.2 L965.3 358.6 L967.8 359.1 L970.2 359.6 L972.8 360.2 L975.6 360.8 L978.9 361.5 L982.6 362.2 L987.1 363.1 L992.2 364.3 L997.7 365.7 L1003.5 367.0 L1009.3 368.3 L1014.9 369.2 L1020.1 369.8 L1024.7 369.8 L1028.8 369.3 L1032.6 368.4 L1036.2 367.2 L1039.6 365.7 L1042.9 364.0 L1046.0 362.1 L1049.2 360.0 L1052.3 358.0 L1055.4 355.9 L1058.3 353.6 L1061.1 351.1 L1063.9 348.5 L1066.6 345.8 L1069.3 342.9 L1072.0 340.1 L1074.8 337.2 L1077.6 334.1 L1080.3 330.8 L1083.1 327.3 L1085.8 323.8 L1088.6 320.3 L1091.4 317.0 L1094.2 314.0 L1097.1 311.3 L1100.0 309.1 L1102.9 307.0 L1105.9 305.1 L1108.8 303.4 L1111.8 302.0 L1114.8 300.9 L1117.8 300.0 L1120.8 299.5 L1123.8 299.3 L1126.8 299.5 L1129.8 299.9 L1132.7 300.6 L1135.7 301.6 L1138.5 302.7 L1141.4 304.1 L1144.3 305.6 L1147.2 307.4 L1150.2 309.6 L1153.2 312.1 L1156.1 314.7 L1158.9 317.3 L1161.7 319.8 L1164.3 322.0 L1166.8 323.9 L1169.1 325.4 L1171.2 326.8 L1173.1 328.0 L1174.9 329.0 L1176.8 329.9 L1178.8 330.7 L1180.9 331.5 L1183.4 332.2 L1186.2 333.0 L1189.2 333.8 L1192.4 334.5 L1195.7 335.1 L1199.0 335.6 L1202.3 335.9 L1205.5 335.9 L1208.4 335.7 L1211.2 335.2 L1214.0 334.4 L1216.7 333.3 L1219.4 332.0 L1222.1 330.6 L1224.8 329.2 L1227.5 327.7 L1230.1 326.3 L1232.7 324.9 L1235.3 323.3 L1238.0 321.6 L1240.6 319.9 L1243.2 318.2 L1245.7 316.7 L1248.1 315.5 L1250.4 314.7 L1252.4 314.2 L1254.2 314.0 L1255.9 313.9 L1257.6 314.2 L1259.2 314.8 L1260.7 315.7 L1262.0 316.9 L1263.4 318.4 L1264.6 320.3 L1265.8 322.5 L1267.0 325.0 L1268.0 327.8 L1269.1 330.7 L1270.1 333.8 L1271.1 337.0 L1272.1 340.3 L1273.2 343.7 L1274.1 347.3 L1275.1 351.1 L1276.0 355.0 L1277.0 359.0 L1278.1 363.1 L1279.2 367.2 L1280.3 371.4 L1281.7 375.9 L1283.2 381.0 L1284.9 386.2 L1286.6 391.5 L1288.2 396.5 L1289.7 401.1 L1291.0 405.0 L1292.0 408.0 L1292.8 409.9 L1293.2 410.8 L1293.2 410.8 L1291.6 410.8 L1291.2 411.2 L1291.3 410.9 L1291.6 410.2 L1292.5 409.5 L1291.9 407.7 L1289.9 409.2 L1289.4 410.4 L1289.4 410.5 L1290.4 409.3 L1294.3 409.3 L1294.9 409.8 L1294.5 409.1 L1293.8 407.3 L1292.8 404.4 L1291.5 400.5 L1290.0 396.0 L1288.3 390.9 L1286.6 385.7 L1285.0 380.4 L1283.4 375.4 L1282.1 370.9 L1280.9 366.8 L1279.7 362.6 L1278.7 358.6 L1277.7 354.5 L1276.8 350.6 L1275.8 346.9 L1274.8 343.2 L1273.8 339.7 L1272.8 336.4 L1271.8 333.2 L1270.9 330.1 L1269.9 327.1 L1268.8 324.2 L1267.7 321.6 L1266.5 319.2 L1265.1 317.0 L1263.6 315.3 L1262.1 313.8 L1260.2 312.6 L1258.2 311.7 L1256.0 311.4 L1253.9 311.4 L1251.9 311.7 L1249.6 312.2 L1247.0 313.1 L1244.4 314.4 L1241.8 316.0 L1239.2 317.7 L1236.6 319.4 L1234.0 321.2 L1231.5 322.8 L1229.0 324.2 L1226.4 325.6 L1223.7 327.1 L1221.1 328.6 L1218.5 330.0 L1215.9 331.3 L1213.3 332.4 L1210.7 333.2 L1208.2 333.7 L1205.4 334.0 L1202.4 334.0 L1199.3 333.7 L1196.0 333.3 L1192.8 332.7 L1189.6 332.0 L1186.7 331.3 L1183.9 330.5 L1181.5 329.8 L1179.4 329.1 L1177.5 328.3 L1175.7 327.5 L1173.9 326.5 L1172.1 325.3 L1170.0 324.0 L1167.8 322.5 L1165.4 320.7 L1162.8 318.5 L1160.1 316.0 L1157.2 313.4 L1154.3 310.8 L1151.3 308.2 L1148.3 305.9 L1145.2 304.0 L1142.2 302.4 L1139.3 301.0 L1136.3 299.8 L1133.3 298.8 L1130.2 298.0 L1127.0 297.6 L1123.8 297.4 L1120.6 297.6 L1117.4 298.2 L1114.2 299.1 L1111.1 300.3 L1108.0 301.8 L1104.9 303.5 L1101.9 305.5 L1098.9 307.6 L1096.0 310.0 L1093.0 312.8 L1090.1 315.9 L1087.3 319.3 L1084.5 322.8 L1081.8 326.3 L1079.1 329.8 L1076.4 333.1 L1073.6 336.1 L1070.9 339.0 L1068.2 341.9 L1065.5 344.7 L1062.8 347.4 L1060.1 350.0 L1057.3 352.4 L1054.5 354.6 L1051.5 356.7 L1048.3 358.8 L1045.2 360.8 L1042.1 362.6 L1038.9 364.3 L1035.7 365.8 L1032.2 367.0 L1028.6 367.8 L1024.7 368.3 L1020.2 368.3 L1015.1 367.7 L1009.6 366.8 L1003.8 365.6 L998.1 364.3 L992.5 362.9 L987.4 361.7 L982.9 360.8 L979.1 360.1 L975.9 359.4 L973.1 358.8 L970.5 358.2 L968.0 357.7 L965.6 357.2 L963.1 356.7 L960.3 356.3 L957.5 355.9 L954.6 355.7 L951.8 355.6 L949.0 355.4 L946.2 355.3 L943.5 355.1 L940.8 354.8 L938.1 354.4 L935.3 353.8 L932.5 353.0 L929.5 352.0 L926.5 351.0 L923.4 350.0 L920.3 349.1 L917.3 348.3 L914.3 347.6 L911.2 347.3 L908.3 347.4 L905.7 347.6 L903.3 347.8 L901.2 348.0 L899.4 348.0 L897.9 347.8 L896.5 347.3 L894.9 346.4 L893.2 345.1 L891.3 343.5 L889.3 341.5 L887.3 339.4 L885.3 337.2 L883.2 335.0 L881.3 332.9 L879.5 331.0 L877.9 329.2 L876.4 327.4 L874.8 325.4 L873.0 323.4 L871.1 321.3 L868.8 319.3 L866.4 317.3 L863.6 315.4 L860.5 313.3 L857.2 311.2 L853.8 309.1 L850.3 307.1 L846.9 305.4 L843.7 304.1 L840.8 303.2 L838.1 302.8 L835.7 302.8 L833.5 303.2 L831.4 303.9 L829.6 304.9 L827.8 306.1 L826.0 307.4 L824.0 308.8 L821.8 310.6 L819.5 312.8 L817.1 315.3 L814.8 317.8 L812.4 320.5 L809.9 323.1 L807.4 325.6 L804.9 328.0 L802.2 330.3 L799.4 332.7 L796.5 335.1 L793.6 337.5 L790.7 339.8 L787.7 341.9 L784.7 343.9 L781.7 345.7 L778.6 347.4 L775.4 349.0 L772.1 350.5 L768.8 351.8 L765.6 352.9 L762.4 353.8 L759.4 354.5 L756.5 354.8 L753.9 354.8 L751.4 354.6 L748.9 354.1 L746.5 353.3 L744.1 352.4 L741.6 351.3 L739.0 350.1 L736.3 348.8 L733.5 347.4 L730.7 345.7 L727.7 343.7 L724.7 341.5 L721.6 339.4 L718.5 337.3 L715.3 335.4 L712.1 333.8 L709.1 332.4 L706.1 331.2 L703.2 330.1 L700.2 329.2 L697.2 328.3 L694.2 327.6 L691.0 327.1 L687.8 326.7 L684.4 326.5 L680.9 326.4 L677.3 326.5 L673.7 326.7 L670.1 327.1 L666.5 327.5 L662.9 328.1 L659.5 328.7 L656.2 329.4 L652.9 330.2 L649.7 331.2 L646.5 332.2 L643.4 333.3 L640.3 334.5 L637.1 335.7 L633.9 336.9 L630.7 338.2 L627.3 339.6 L623.9 341.0 L620.5 342.5 L617.2 343.9 L613.9 345.4 L610.6 346.9 L607.4 348.4 L604.2 350.0 L601.1 351.9 L598.0 353.9 L595.2 355.7 L592.5 357.2 L590.2 358.3 L588.2 358.9 L586.7 359.0 L585.3 358.6 L583.8 357.7 L582.1 356.2 L580.2 354.3 L578.2 352.1 L576.2 349.7 L574.0 347.3 L571.9 345.2 L570.1 343.4 L568.4 341.4 L566.7 339.2 L564.8 337.0 L562.7 334.8 L560.2 332.7 L557.0 331.1 L553.1 330.4 L549.4 331.0 L546.3 332.4 L543.7 334.3 L541.5 336.4 L539.6 338.7 L537.7 341.1 L535.9 343.5 L534.0 346.0 L532.0 348.8 L529.9 352.0 L527.9 355.3 L525.9 358.7 L523.9 362.0 L522.0 365.2 L520.0 367.9 L518.0 370.3 L516.0 372.6 L513.8 374.8 L511.7 376.9 L509.7 378.7 L507.6 380.2 L505.7 381.4 L503.8 382.1 L501.9 382.5 L499.9 382.3 L497.6 381.6 L494.9 380.4 L492.0 378.8 L488.9 377.0 L485.7 375.2 L482.4 373.4 L479.2 372.1 L476.3 371.0 L473.6 369.8 L470.8 368.6 L467.9 367.4 L464.7 366.4 L461.3 365.7 L457.5 365.6 L453.4 366.1 L448.8 367.5 L443.8 369.6 L438.6 372.1 L433.2 374.9 L427.9 377.8 L422.9 380.6 L418.4 383.0 L414.5 384.8 L411.1 386.3 L408.0 387.6 L405.4 388.8 L403.1 389.7 L401.1 390.3 L399.3 390.7 L397.8 390.9 L396.5 390.9 L395.4 390.6 L394.5 390.1 L393.5 389.3 L392.3 388.0 L390.9 386.5 L389.3 384.8 L387.3 383.0 L385.1 381.4 L382.9 380.0 L380.7 378.7 L378.3 377.4 L375.9 376.1 L373.4 374.8 L370.8 373.6 L368.1 372.4 L365.3 371.2 L362.3 370.0 L359.2 369.0 L355.9 368.1 L352.7 367.2 L349.7 366.3 L346.8 365.3 L344.2 364.3 L342.1 363.2 L340.4 362.1 L338.9 360.9 L337.7 359.6 L336.3 358.0 L334.9 356.3 L333.2 354.3 L331.1 352.2 L328.7 350.1 L326.1 347.9 L323.2 345.4 L320.0 342.5 L316.6 339.6 L312.9 336.8 L309.0 334.2 L304.8 332.2 L300.1 331.0 L295.0 331.1 L290.4 332.4 L286.1 334.3 L282.2 336.5 L278.7 338.5 L275.5 340.0 L273.0 340.8 L271.4 341.0 L270.0 340.5 L267.9 339.3 L265.4 337.4 L262.6 334.9 L259.6 332.2 L256.1 329.6 L251.9 327.5 L247.0 326.7 L242.4 327.5 L238.6 329.2 L235.2 331.4 L232.1 334.0 L229.3 336.7 L226.7 339.6 L224.1 342.5 L221.6 345.3 L219.1 348.3 L216.5 351.7 L214.0 355.2 L211.6 358.8 L209.3 362.3 L207.0 365.8 L204.8 369.0 L202.6 372.1 L200.3 375.5 L198.2 379.1 L196.2 382.7 L194.3 385.9 L192.6 388.6 L191.2 390.4 L190.5 391.0 L191.3 390.8 L192.0 390.9 L191.0 389.8 L189.5 387.3 L187.8 384.1 L186.2 380.4 L184.6 376.6 L183.1 373.1 L181.8 370.1 L180.9 368.0 L180.3 366.3 L179.9 364.6 L179.4 362.8 L178.6 361.0 L177.1 358.8 L174.5 356.6 L170.7 355.0 L166.0 354.9 L162.2 356.4 L160.0 358.2 L158.7 359.7 L157.9 360.9 L157.3 361.8 L157.0 362.3 L156.4 362.9 L155.0 363.8 L153.4 364.8 L151.9 365.6 L150.6 366.3 L149.2 366.8 L147.9 367.2 L146.5 367.4 L144.9 367.4 L142.9 367.3 L140.4 366.9 L137.6 366.3 L134.5 365.5 L131.3 364.7 L127.9 363.7 L124.4 362.8 L120.9 361.8 L117.4 360.7 L113.5 359.4 L109.4 358.0 L105.2 356.5 L101.0 354.9 L97.0 353.5 L93.2 352.2 L89.7 351.0 L86.7 350.1 L84.1 349.4 L81.7 348.8 L79.5 348.3 L77.5 347.8 L75.5 347.4 L73.5 347.0 L71.3 346.5 L68.9 346.0 L66.3 345.5 L63.6 345.0 L61.0 344.5 L58.5 344.1 L56.3 343.6 L54.5 343.3 L53.1 343.0Z" fill="#8c0c15"/>
 <path d="M1262.5 317 Q1270 331 1276 354 Q1282 380 1290.5 404" fill="none" stroke="#b5101c" stroke-width="3" stroke-linecap="round" transform="translate(1.5,-1)"/>
 <path d="M52.0 348.0 C55.0 348.7 64.1 350.5 70.0 352.0 C75.9 353.5 79.5 354.2 87.6 357.0 C95.7 359.8 109.1 366.0 118.6 369.0 C128.1 372.0 137.9 374.8 144.8 375.0 C151.7 375.2 156.0 371.8 160.0 370.0 C164.0 368.2 166.0 363.8 168.6 364.5 C171.2 365.2 172.0 368.8 175.7 374.0 C179.4 379.2 185.8 395.8 191.0 396.0 C196.2 396.2 200.9 382.8 206.7 375.0 C212.5 367.2 219.0 356.0 225.7 349.0 C232.4 342.0 239.4 333.3 247.0 333.0 C254.6 332.7 262.2 346.4 271.0 347.0 C279.8 347.6 290.4 335.3 299.5 336.4 C308.6 337.5 318.9 348.7 325.7 353.8 C332.4 358.9 333.6 363.5 340.0 367.0 C346.4 370.5 356.7 372.0 363.8 375.0 C370.9 378.0 377.5 381.5 382.9 384.8 C388.3 388.1 390.5 394.3 396.0 394.8 C401.5 395.3 406.3 392.3 416.0 388.0 C425.7 383.7 443.7 371.2 454.0 369.0 C464.3 366.8 470.0 372.2 478.0 375.0 C486.0 377.8 494.8 386.3 502.0 386.0 C509.2 385.7 515.1 379.2 521.0 373.0 C526.9 366.8 532.3 355.0 537.6 349.0 C542.9 343.0 547.8 337.0 553.0 337.0 C558.2 337.0 563.0 344.7 568.6 349.0 C574.2 353.3 579.7 362.6 586.4 363.0 C593.1 363.4 600.9 355.3 609.0 351.4 C617.1 347.5 626.5 342.9 635.0 339.5 C643.5 336.1 651.2 332.8 660.0 331.0 C668.8 329.2 679.1 328.0 687.6 328.8 C696.1 329.6 703.1 332.2 711.0 336.0 C718.9 339.8 727.4 347.8 735.0 351.4 C742.6 355.0 748.7 358.0 756.7 357.4 C764.7 356.8 774.7 352.6 783.0 348.0 C791.3 343.4 799.6 336.2 806.7 330.0 C813.8 323.8 820.2 315.0 825.7 311.0 C831.2 307.0 833.6 304.4 840.0 306.0 C846.4 307.6 857.5 315.5 863.8 320.5 C870.1 325.5 872.8 330.9 878.0 336.0 C883.2 341.1 888.8 348.8 894.8 351.4 C900.8 354.0 906.7 350.4 913.8 351.4 C920.9 352.4 929.9 356.1 937.6 357.4 C945.3 358.7 952.5 358.0 960.0 359.0 C967.5 360.0 971.6 361.3 982.4 363.3 C993.2 365.3 1013.0 371.7 1024.8 371.0 C1036.6 370.3 1044.5 364.5 1053.0 359.0 C1061.5 353.5 1068.2 345.8 1075.7 338.0 C1083.2 330.2 1090.5 318.6 1098.0 312.4 C1105.5 306.2 1113.4 301.9 1121.0 301.0 C1128.6 300.1 1136.1 302.8 1143.6 306.8 C1151.1 310.8 1159.4 320.5 1166.0 325.0 C1172.6 329.5 1175.9 331.6 1183.0 333.6 C1190.1 335.7 1200.6 338.2 1208.6 337.3 C1216.6 336.4 1223.9 331.4 1231.0 328.0 C1238.1 324.6 1245.8 318.1 1251.0 316.7 C1256.2 315.3 1258.7 315.5 1262.0 319.5 C1265.3 323.5 1268.0 332.0 1270.8 340.7 C1273.6 349.4 1275.7 360.5 1279.0 371.8 C1282.3 383.1 1288.3 402.0 1290.6 408.5 C1292.9 415.0 1292.6 410.6 1293.0 411.0 L1293 525 L52 525 Z" fill="url(#wf)"/>
 <g>
  <ellipse cx="688" cy="325.5" rx="8" ry="4" fill="#5fe63a"/>
  <ellipse cx="853" cy="315" rx="8.5" ry="6.2" fill="#f6d83a" stroke="#f2a030" stroke-width="1"/>
  <ellipse cx="911" cy="351" rx="8" ry="2.5" fill="#f6b53a"/>
  <ellipse cx="961" cy="355.5" rx="10" ry="4" fill="#f9d230"/>
  <ellipse cx="1127" cy="301" rx="9" ry="2.6" fill="#f7dc3a"/>
  <ellipse cx="1183" cy="333" rx="5" ry="2" fill="#f59a3a"/>
  <ellipse cx="622" cy="342.5" rx="9" ry="2.2" fill="#f08a2a"/>
  <ellipse cx="1024" cy="368.5" rx="6" ry="2" fill="#ee5a6a"/>
  <ellipse cx="121" cy="347" rx="6.5" ry="2.2" fill="#dc2a3c" transform="rotate(45 121 347)"/>
  <ellipse cx="176.5" cy="355" rx="6" ry="1.3" fill="#d21f2c" transform="rotate(78 176.5 355)"/>
  <ellipse cx="1262" cy="316" rx="4" ry="1.6" fill="#e0202e"/>
  <ellipse cx="822" cy="313" rx="6" ry="3" fill="#e8402a" transform="rotate(-45 822 313)"/>
 </g>
</svg>
<div id="gauge"></div>
<svg class="abs" style="left:0;top:0" width="344" height="320" viewBox="0 0 344 320">
 <defs><linearGradient id="arc" x1="0" y1="0" x2="0" y2="1"><stop offset="0" stop-color="#6fd0f5"/><stop offset=".5" stop-color="#e6f6ff"/><stop offset="1" stop-color="#b9a5f0" stop-opacity=".5"/></linearGradient></defs>
 <path d="M279.8 79 Q300 96 311 120 Q321 143 323.4 172" fill="none" stroke="url(#arc)" stroke-width="3.4" stroke-linecap="butt"/>
</svg>
<div id="bottom"></div>
<div class="card" style="left:54px;width:267px;background:linear-gradient(90deg,#14a5fa 0%,#1c9df4 45%,#2490e8 64%,#2a7bce 77%,#22539e 87%,#182c68 95%,#131b4c 100%)"></div>
<div class="card" style="left:358.5px;width:275.5px;background:linear-gradient(90deg,#b94158 0%,#c4485a 6%,#d0514f 30%,#e06238 52%,#ee7727 60.3%,#f1b33c 60.4%,#f3bd41 72%,#efbb40 86%,#d9a539 95%,#c39233 100%)"></div>
<div class="card" style="left:673.5px;width:268.5px;background:radial-gradient(ellipse 30% 75% at 57% 36%,rgba(88,242,140,.4),rgba(88,242,140,0) 100%),linear-gradient(90deg,#1aa2a0 0%,#1fac9c 15%,#28b898 30%,#33c893 42%,#40da8c 55%,#3cd28a 66%,#2eb084 76%,#1d8276 84%,#11505e 91%,#0c3450 96%,#0a2444 100%)"></div>
<div class="card" style="left:984.5px;width:288.5px;background:linear-gradient(0deg,rgba(240,80,40,0) 0,rgba(240,80,40,0) 100%),linear-gradient(90deg,#ee2e5c 0%,#f83f66 22%,#ff6372 43%,#ff8472 55%,#fda467 68%,#fbbe57 80%,#f8c54a 91%,#ebb342 100%)"></div>
<div class="abs" style="left:1100px;top:688px;width:126px;height:8px;overflow:hidden"><div style="position:absolute;left:0;top:1.5px;width:126px;height:14px;border-radius:50%;background:radial-gradient(ellipse at center,#f04a2e 0,#f04a2e 45%,rgba(242,90,50,.6) 70%,rgba(245,120,60,0) 100%)"></div></div>
<div class="abs" style="left:268.5px;top:662.5px;width:3px;height:10px;background:#f4f8ff;border-radius:1px"></div>
<div class="abs" style="left:407px;top:664px;width:110px;height:3px;background:radial-gradient(circle at 1.5px 1.5px,rgba(255,255,255,.28) 1px,rgba(255,255,255,0) 1.7px) 0 0/17.3px 3px"></div>
<div class="abs" id="wm" style="left:1206px;top:705px;width:128px;height:53px;border-radius:27px;background:rgba(14,24,40,.22)"></div>
<div class="abs" id="t0" style="left:125.0px;top:134.4px;font-size:80px;color:#fff;letter-spacing:-1.00px;transform-origin:0 0;transform:scaleX(0.847);">85%</div>
<div class="abs" id="t1" style="left:125.0px;top:206.7px;font-size:19px;color:#eef4fb;letter-spacing:-0.45px;">Ort eyınorc cuot</div>
<div class="abs" id="t2" style="left:159.0px;top:252.5px;font-size:18.5px;color:#f4f7fb;letter-spacing:0.93px;transform-origin:0 0;transform:scaleX(1.033);">VBoune</div>
<div class="abs" id="t3" style="left:593.0px;top:49.7px;font-size:20px;color:#f0f0f0;letter-spacing:1.00px;transform-origin:0 0;transform:scaleX(1.066);">IIneemıle.court</div>
<div class="abs" id="t4" style="left:995.0px;top:52.3px;font-size:10px;color:#e8e8e8;letter-spacing:0.50px;transform-origin:0 0;transform:scaleX(1.151);">Oıırt</div>
<div class="abs" id="t5" style="left:1032.6px;top:52.6px;font-size:9.5px;color:#8ccad8;letter-spacing:0.11px;">ΠSUOI 6IO</div>
<div class="abs" id="t6" style="left:1105.0px;top:52.6px;font-size:9.5px;color:#e8e8e8;letter-spacing:0.48px;transform-origin:0 0;transform:scaleX(1.135);">OIIT</div>
<div class="abs" id="t7" style="left:1139.6px;top:52.6px;font-size:9.5px;color:#e8e8e8;letter-spacing:0.18px;">IΛE03HIOI</div>
<div class="abs" id="t8" style="left:1194.5px;top:52.6px;font-size:9.5px;color:#8ccad8;letter-spacing:0.08px;">SOI6</div>
<div class="abs" id="t9" style="left:1248.0px;top:52.6px;font-size:9.5px;color:#86c4e4;letter-spacing:-0.48px;transform-origin:0 0;transform:scaleX(0.869);">06%</div>
<div class="abs" id="t10" style="left:367.8px;top:97.2px;font-size:10.5px;color:#cfd5db;letter-spacing:-0.53px;transform-origin:0 0;transform:scaleX(0.824);">15</div>
<div class="abs" id="t11" style="left:367.8px;top:159.9px;font-size:10.5px;color:#cfd5db;letter-spacing:-0.53px;transform-origin:0 0;transform:scaleX(0.869);">70</div>
<div class="abs" id="t12" style="left:367.8px;top:223.9px;font-size:10.5px;color:#cfd5db;letter-spacing:-0.53px;transform-origin:0 0;transform:scaleX(0.869);">66</div>
<div class="abs" id="t13" style="left:367.8px;top:272.9px;font-size:10.5px;color:#cfd5db;letter-spacing:-0.53px;transform-origin:0 0;transform:scaleX(0.869);">18</div>
<div class="abs" id="t14" style="left:1221.0px;top:86.5px;font-size:10px;color:#cfd5db;letter-spacing:0.30px;">88065</div>
<div class="abs" id="t15" style="left:1221.0px;top:98.1px;font-size:10px;color:#cfd5db;letter-spacing:-0.50px;transform-origin:0 0;transform:scaleX(0.849);">SHΛ010</div>
<div class="abs" id="t16" style="left:1222.0px;top:159.1px;font-size:10px;color:#cfd5db;letter-spacing:0.50px;transform-origin:0 0;transform:scaleX(1.054);">86 20</div>
<div class="abs" id="t17" style="left:1222.0px;top:224.6px;font-size:10px;color:#cfd5db;letter-spacing:0.50px;transform-origin:0 0;transform:scaleX(1.054);">80 70</div>
<div class="abs" id="t18" style="left:1238.5px;top:274.1px;font-size:10px;color:#cfd5db;letter-spacing:-0.23px;">7S</div>
<div class="abs" id="t19" style="left:98.2px;top:558.4px;font-size:18px;color:#fff;letter-spacing:-0.69px;-webkit-text-stroke:.3px #fff;">Chiy-locesCînitloeore</div>
<div class="abs" id="t20" style="left:391.6px;top:558.4px;font-size:18px;color:#fff;letter-spacing:-0.38px;-webkit-text-stroke:.3px #fff;">Conghaneesłc Diisttirlivotion</div>
<div class="abs" id="t21" style="left:761.7px;top:558.4px;font-size:18px;color:#fff;letter-spacing:-0.17px;-webkit-text-stroke:.3px #fff;">Exαnɟe Hloug</div>
<div class="abs" id="t22" style="left:1069.0px;top:558.4px;font-size:18px;color:#fff;letter-spacing:-0.90px;transform-origin:0 0;transform:scaleX(0.972);-webkit-text-stroke:.3px #fff;">Commemiive Scorre</div>
<div class="abs" id="t23" style="left:169.0px;top:707.9px;font-size:16px;color:#f2f2f2;letter-spacing:0.44px;">Yɑ́ni</div>
<div class="abs" id="t24" style="left:480.4px;top:707.9px;font-size:16px;color:#f2f2f2;letter-spacing:-0.11px;">Yourr</div>
<div class="abs" id="t25" style="left:798.4px;top:708.2px;font-size:16px;color:#f2f2f2;letter-spacing:-0.80px;transform-origin:0 0;transform:scaleX(0.982);">2001</div>
<div class="abs" id="t26" style="left:1112.8px;top:708.2px;font-size:16px;color:#f2f2f2;letter-spacing:0.80px;transform-origin:0 0;transform:scaleX(1.032);">2000</div>
<div class="abs" id="t27" style="left:84.4px;top:605.1px;font-size:10px;color:#eef4fa;letter-spacing:-0.50px;transform-origin:0 0;transform:scaleX(0.866);text-shadow:0 0 1px rgba(10,30,60,.8);">88</div>
<div class="abs" id="t28" style="left:193.0px;top:605.1px;font-size:10px;color:#eef4fa;letter-spacing:0.50px;transform-origin:0 0;transform:scaleX(1.015);text-shadow:0 0 1px rgba(10,30,60,.8);">78</div>
<div class="abs" id="t29" style="left:289.0px;top:605.1px;font-size:10px;color:#d4dcf0;letter-spacing:0.50px;transform-origin:0 0;transform:scaleX(1.170);text-shadow:0 0 1px rgba(10,30,60,.8);">3%</div>
<div class="abs" id="t30" style="left:84.4px;top:634.4px;font-size:10px;color:#eef4fa;letter-spacing:-0.50px;transform-origin:0 0;transform:scaleX(0.866);text-shadow:0 0 1px rgba(10,30,60,.8);">66</div>
<div class="abs" id="t31" style="left:193.0px;top:634.4px;font-size:10px;color:#eef4fa;letter-spacing:0.50px;transform-origin:0 0;transform:scaleX(1.015);text-shadow:0 0 1px rgba(10,30,60,.8);">88</div>
<div class="abs" id="t32" style="left:280.0px;top:634.4px;font-size:10px;color:#d4dcf0;letter-spacing:-0.33px;text-shadow:0 0 1px rgba(10,30,60,.8);">10016</div>
<div class="abs" id="t33" style="left:84.4px;top:663.7px;font-size:10px;color:#eef4fa;letter-spacing:-0.50px;transform-origin:0 0;transform:scaleX(0.866);text-shadow:0 0 1px rgba(10,30,60,.8);">28</div>
<div class="abs" id="t34" style="left:193.0px;top:663.7px;font-size:10px;color:#eef4fa;letter-spacing:0.50px;transform-origin:0 0;transform:scaleX(1.015);text-shadow:0 0 1px rgba(10,30,60,.8);">69</div>
<div class="abs" id="t35" style="left:280.7px;top:663.7px;font-size:10px;color:#d4dcf0;letter-spacing:-0.32px;text-shadow:0 0 1px rgba(10,30,60,.8);">2600</div>
<div class="abs" id="t36" style="left:379.5px;top:605.1px;font-size:10px;color:#eef4fa;letter-spacing:-0.50px;transform-origin:0 0;transform:scaleX(0.988);font-style:italic;text-shadow:0 0 1px rgba(10,30,60,.8);">82</div>
<div class="abs" id="t37" style="left:592.0px;top:605.1px;font-size:10px;color:#1c1a22;letter-spacing:-0.50px;transform-origin:0 0;transform:scaleX(0.989);font-weight:bold;font-style:italic;text-shadow:0 0 1px rgba(255,255,255,.7);">96%</div>
<div class="abs" id="t38" style="left:379.5px;top:634.4px;font-size:10px;color:#eef4fa;letter-spacing:-0.50px;transform-origin:0 0;transform:scaleX(0.988);font-style:italic;text-shadow:0 0 1px rgba(10,30,60,.8);">47</div>
<div class="abs" id="t39" style="left:497.6px;top:634.4px;font-size:10px;color:#eef4fa;letter-spacing:-0.14px;font-style:italic;text-shadow:0 0 1px rgba(10,30,60,.8);">997</div>
<div class="abs" id="t40" style="left:587.0px;top:634.4px;font-size:10px;color:#1c1a22;letter-spacing:0.33px;font-weight:bold;font-style:italic;text-shadow:0 0 1px rgba(255,255,255,.7);">5.9%</div>
<div class="abs" id="t41" style="left:379.5px;top:663.7px;font-size:10px;color:#eef4fa;letter-spacing:-0.50px;transform-origin:0 0;transform:scaleX(0.988);font-style:italic;text-shadow:0 0 1px rgba(10,30,60,.8);">07</div>
<div class="abs" id="t42" style="left:583.5px;top:663.7px;font-size:10px;color:#1c1a22;letter-spacing:0.50px;transform-origin:0 0;transform:scaleX(1.124);font-weight:bold;font-style:italic;text-shadow:0 0 1px rgba(255,255,255,.7);">7.8%</div>
<div class="abs" id="t43" style="left:697.0px;top:605.1px;font-size:10px;color:#eef4fa;letter-spacing:0.50px;transform-origin:0 0;transform:scaleX(1.084);text-shadow:0 0 1px rgba(10,30,60,.8);">98</div>
<div class="abs" id="t44" style="left:906.0px;top:604.6px;font-size:12px;color:#eef4fa;letter-spacing:-0.60px;transform-origin:0 0;transform:scaleX(0.932);text-shadow:0 0 1px rgba(10,30,60,.8);">2%</div>
<div class="abs" id="t45" style="left:697.0px;top:634.4px;font-size:10px;color:#eef4fa;letter-spacing:0.50px;transform-origin:0 0;transform:scaleX(1.084);text-shadow:0 0 1px rgba(10,30,60,.8);">68</div>
<div class="abs" id="t46" style="left:804.0px;top:634.4px;font-size:10px;color:#eef4fa;letter-spacing:-0.50px;transform-origin:0 0;transform:scaleX(0.994);text-shadow:0 0 1px rgba(10,30,60,.8);">990</div>
<div class="abs" id="t47" style="left:903.0px;top:634.4px;font-size:10px;color:#eef4fa;letter-spacing:-0.50px;transform-origin:0 0;transform:scaleX(0.978);text-shadow:0 0 1px rgba(10,30,60,.8);">09%</div>
<div class="abs" id="t48" style="left:697.0px;top:663.7px;font-size:10px;color:#eef4fa;letter-spacing:0.50px;transform-origin:0 0;transform:scaleX(1.084);text-shadow:0 0 1px rgba(10,30,60,.8);">08</div>
<div class="abs" id="t49" style="left:906.0px;top:663.7px;font-size:10px;color:#eef4fa;letter-spacing:-0.50px;transform-origin:0 0;transform:scaleX(0.956);text-shadow:0 0 1px rgba(10,30,60,.8);">191</div>
<div class="abs" id="t50" style="left:1006.5px;top:605.7px;font-size:10px;color:#eef4fa;letter-spacing:-0.50px;transform-origin:0 0;transform:scaleX(0.988);text-shadow:0 0 1px rgba(10,30,60,.8);">92</div>
<div class="abs" id="t51" style="left:1231.0px;top:605.7px;font-size:10px;color:#1c1a22;letter-spacing:-0.33px;font-weight:bold;font-style:italic;text-shadow:0 0 1px rgba(255,255,255,.7);">1.2%</div>
<div class="abs" id="t52" style="left:1006.5px;top:634.1px;font-size:10px;color:#eef4fa;letter-spacing:-0.50px;transform-origin:0 0;transform:scaleX(0.988);text-shadow:0 0 1px rgba(10,30,60,.8);">81</div>
<div class="abs" id="t53" style="left:1229.6px;top:634.1px;font-size:10px;color:#1c1a22;letter-spacing:0.13px;font-weight:bold;font-style:italic;text-shadow:0 0 1px rgba(255,255,255,.7);">5.4%</div>
<div class="abs" id="t54" style="left:1006.5px;top:663.9px;font-size:10px;color:#eef4fa;letter-spacing:-0.50px;transform-origin:0 0;transform:scaleX(0.988);text-shadow:0 0 1px rgba(10,30,60,.8);">80</div>
<div class="abs" id="t55" style="left:1229.6px;top:663.9px;font-size:10px;color:#1c1a22;letter-spacing:0.13px;font-weight:bold;font-style:italic;text-shadow:0 0 1px rgba(255,255,255,.7);">2.3%</div>
<div class="abs" id="t56" style="left:1224.0px;top:717.0px;font-size:30px;color:#bec5ce;letter-spacing:0.21px;font-weight:500;">AI生成</div>
</body></html>
